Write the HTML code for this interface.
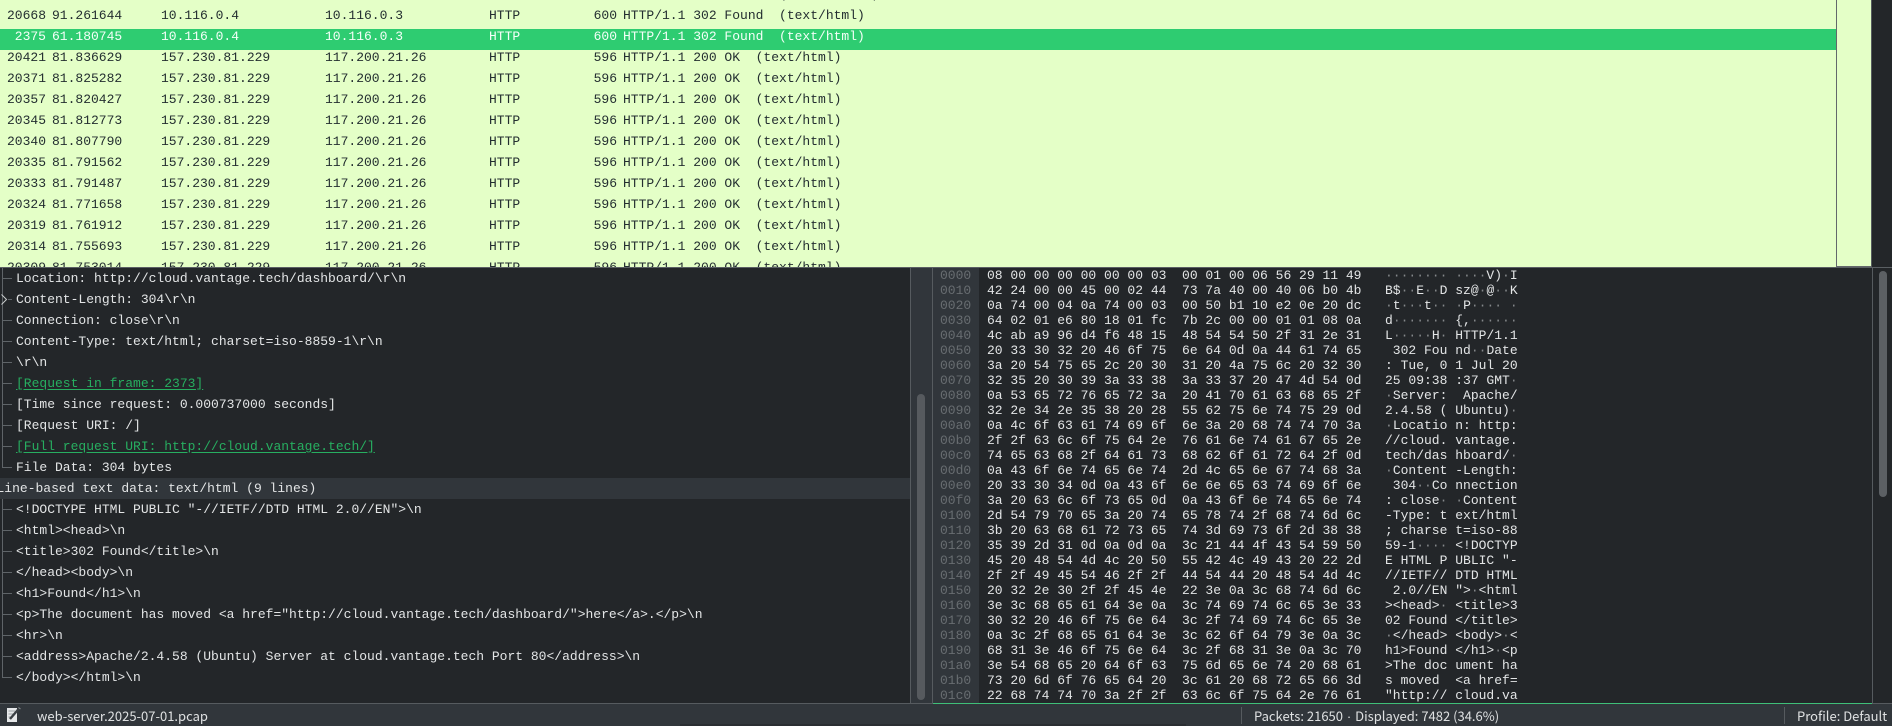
<!DOCTYPE html>
<html><head><meta charset="utf-8"><title>web-server.2025-07-01.pcap</title>
<style>
html,body{margin:0;padding:0;width:1892px;height:726px;overflow:hidden;background:#232629}
body{position:relative;font-family:"Liberation Mono",monospace;font-size:13px;color:#e3e5e6}
div,span,svg{position:absolute}
i{position:static;font-style:normal;color:#85888b}
em{font-style:normal;font-family:"Liberation Sans",sans-serif;padding:0 1px}
#list{left:0;top:0;width:1892px;height:267px;overflow:hidden;background:#e4ffc7;color:#232e30}
.r{left:0;width:1836px;height:21px;line-height:21px;white-space:pre}
.n{left:0;width:46px;text-align:right}.t{left:52px}.s{left:161px}.d{left:325px}.p{left:489px}.l{left:570px;width:47px;text-align:right}.o{left:623px}
.sel{color:#f4fff8}
.x{height:21px;line-height:21px;left:16px;white-space:pre}
.lnk{color:#27ae60;text-decoration:underline;text-underline-offset:2px}
.h{left:987px;height:15px;line-height:15px;white-space:pre}
.a{left:1385px;height:15px;line-height:15px;white-space:pre}
.f{left:940px;height:15px;line-height:15px;color:#686d71}
.st{font-family:"Noto Sans CJK SC","Liberation Sans",sans-serif;font-size:13px;top:706px;height:20px;line-height:20px;color:#dfe1e2;white-space:pre}
</style></head><body>

<div id="list">
<div style="left:0;top:29px;width:1836px;height:21px;background:#2ecc71"></div>
<div style="left:1836px;top:0;width:1px;height:267px;background:#63686b"></div>
<div style="left:1837px;top:266px;width:34px;height:1px;background:#63686b"></div>
<div style="left:1871px;top:0;width:21px;height:267px;background:#232629"></div>
<div style="left:1871px;top:0;width:1px;height:267px;background:#565b5f"></div>

<div class="r" style="top:-16px"><span class="o">                    (           p</span></div>
<div class="r" style="top:5px"><span class="n">20668</span><span class="t">91.261644</span><span class="s">10.116.0.4</span><span class="d">10.116.0.3</span><span class="p">HTTP</span><span class="l">600</span><span class="o">HTTP/1.1 302 Found  (text/html)</span></div>
<div class="r sel" style="top:26px"><span class="n">2375</span><span class="t">61.180745</span><span class="s">10.116.0.4</span><span class="d">10.116.0.3</span><span class="p">HTTP</span><span class="l">600</span><span class="o">HTTP/1.1 302 Found  (text/html)</span></div>
<div class="r" style="top:47px"><span class="n">20421</span><span class="t">81.836629</span><span class="s">157.230.81.229</span><span class="d">117.200.21.26</span><span class="p">HTTP</span><span class="l">596</span><span class="o">HTTP/1.1 200 OK  (text/html)</span></div>
<div class="r" style="top:68px"><span class="n">20371</span><span class="t">81.825282</span><span class="s">157.230.81.229</span><span class="d">117.200.21.26</span><span class="p">HTTP</span><span class="l">596</span><span class="o">HTTP/1.1 200 OK  (text/html)</span></div>
<div class="r" style="top:89px"><span class="n">20357</span><span class="t">81.820427</span><span class="s">157.230.81.229</span><span class="d">117.200.21.26</span><span class="p">HTTP</span><span class="l">596</span><span class="o">HTTP/1.1 200 OK  (text/html)</span></div>
<div class="r" style="top:110px"><span class="n">20345</span><span class="t">81.812773</span><span class="s">157.230.81.229</span><span class="d">117.200.21.26</span><span class="p">HTTP</span><span class="l">596</span><span class="o">HTTP/1.1 200 OK  (text/html)</span></div>
<div class="r" style="top:131px"><span class="n">20340</span><span class="t">81.807790</span><span class="s">157.230.81.229</span><span class="d">117.200.21.26</span><span class="p">HTTP</span><span class="l">596</span><span class="o">HTTP/1.1 200 OK  (text/html)</span></div>
<div class="r" style="top:152px"><span class="n">20335</span><span class="t">81.791562</span><span class="s">157.230.81.229</span><span class="d">117.200.21.26</span><span class="p">HTTP</span><span class="l">596</span><span class="o">HTTP/1.1 200 OK  (text/html)</span></div>
<div class="r" style="top:173px"><span class="n">20333</span><span class="t">81.791487</span><span class="s">157.230.81.229</span><span class="d">117.200.21.26</span><span class="p">HTTP</span><span class="l">596</span><span class="o">HTTP/1.1 200 OK  (text/html)</span></div>
<div class="r" style="top:194px"><span class="n">20324</span><span class="t">81.771658</span><span class="s">157.230.81.229</span><span class="d">117.200.21.26</span><span class="p">HTTP</span><span class="l">596</span><span class="o">HTTP/1.1 200 OK  (text/html)</span></div>
<div class="r" style="top:215px"><span class="n">20319</span><span class="t">81.761912</span><span class="s">157.230.81.229</span><span class="d">117.200.21.26</span><span class="p">HTTP</span><span class="l">596</span><span class="o">HTTP/1.1 200 OK  (text/html)</span></div>
<div class="r" style="top:236px"><span class="n">20314</span><span class="t">81.755693</span><span class="s">157.230.81.229</span><span class="d">117.200.21.26</span><span class="p">HTTP</span><span class="l">596</span><span class="o">HTTP/1.1 200 OK  (text/html)</span></div>
<div class="r" style="top:257px"><span class="n">20309</span><span class="t">81.753014</span><span class="s">157.230.81.229</span><span class="d">117.200.21.26</span><span class="p">HTTP</span><span class="l">596</span><span class="o">HTTP/1.1 200 OK  (text/html)</span></div>
</div>

<div style="left:0;top:267px;width:1892px;height:1px;background:#5a5f63"></div>

<!-- left: tree -->
<div style="left:0;top:478px;width:910px;height:21px;background:#31363b"></div>
<svg style="left:0;top:268px" width="16" height="420" fill="none" stroke="#5f6468" stroke-width="1">
<path d="M2.5 0V199.5H12M2.5 10.5H12M8 31.5H12M2.5 52.5H12M2.5 73.5H12M2.5 94.5H12M2.5 115.5H12M2.5 136.5H12M2.5 157.5H12M2.5 178.5H12"/>
<path d="M2.5 231V409.5H12M2.5 241.5H12M2.5 262.5H12M2.5 283.5H12M2.5 304.5H12M2.5 325.5H12M2.5 346.5H12M2.5 367.5H12M2.5 388.5H12"/>
<path d="M1.5 26.5L6.5 31.5L1.5 36.5" stroke="#c9cccd"/>
</svg>
<div class="x" style="top:268px">Location: http://cloud.vantage.tech/dashboard/\r\n</div>
<div class="x" style="top:289px">Content-Length: 304\r\n</div>
<div class="x" style="top:310px">Connection: close\r\n</div>
<div class="x" style="top:331px">Content-Type: text/html; charset=iso-8859-1\r\n</div>
<div class="x" style="top:352px">\r\n</div>
<div class="x lnk" style="top:373px">[Request in frame: 2373]</div>
<div class="x" style="top:394px">[Time since request: 0.000737000 seconds]</div>
<div class="x" style="top:415px">[Request URI: /]</div>
<div class="x lnk" style="top:436px">[Full request URI: http://cloud.vantage.tech/]</div>
<div class="x" style="top:457px">File Data: 304 bytes</div>
<div class="x" style="top:478px;left:-3.5px">Line-based text data: text/html (9 lines)</div>
<div class="x" style="top:499px">&lt;!DOCTYPE HTML PUBLIC "-//IETF//DTD HTML 2.0//EN"&gt;\n</div>
<div class="x" style="top:520px">&lt;html&gt;&lt;head&gt;\n</div>
<div class="x" style="top:541px">&lt;title&gt;302 Found&lt;/title&gt;\n</div>
<div class="x" style="top:562px">&lt;/head&gt;&lt;body&gt;\n</div>
<div class="x" style="top:583px">&lt;h1&gt;Found&lt;/h1&gt;\n</div>
<div class="x" style="top:604px">&lt;p&gt;The document has moved &lt;a href="http://cloud.vantage.tech/dashboard/"&gt;here&lt;/a&gt;.&lt;/p&gt;\n</div>
<div class="x" style="top:625px">&lt;hr&gt;\n</div>
<div class="x" style="top:646px">&lt;address&gt;Apache/2.4.58 (Ubuntu) Server at cloud.vantage.tech Port 80&lt;/address&gt;\n</div>
<div class="x" style="top:667px">&lt;/body&gt;&lt;/html&gt;\n</div>

<!-- splitter / scroll -->
<div style="left:910px;top:268px;width:23px;height:436px;background:#31363b"></div>
<div style="left:910px;top:268px;width:1px;height:436px;background:#565b5f"></div>
<div style="left:932px;top:268px;width:1px;height:436px;background:#565b5f"></div>
<div style="left:917px;top:394px;width:8px;height:306px;border-radius:4px;background:#565a5e"></div>
<div style="left:933px;top:268px;width:46px;height:435px;background:#31363b"></div>

<!-- hex offsets -->
<div class="f" style="top:268px">0000</div><div class="f" style="top:283px">0010</div><div class="f" style="top:298px">0020</div><div class="f" style="top:313px">0030</div><div class="f" style="top:328px">0040</div><div class="f" style="top:343px">0050</div><div class="f" style="top:358px">0060</div><div class="f" style="top:373px">0070</div><div class="f" style="top:388px">0080</div><div class="f" style="top:403px">0090</div><div class="f" style="top:418px">00a0</div><div class="f" style="top:433px">00b0</div><div class="f" style="top:448px">00c0</div><div class="f" style="top:463px">00d0</div><div class="f" style="top:478px">00e0</div><div class="f" style="top:493px">00f0</div><div class="f" style="top:508px">0100</div><div class="f" style="top:523px">0110</div><div class="f" style="top:538px">0120</div><div class="f" style="top:553px">0130</div><div class="f" style="top:568px">0140</div><div class="f" style="top:583px">0150</div><div class="f" style="top:598px">0160</div><div class="f" style="top:613px">0170</div><div class="f" style="top:628px">0180</div><div class="f" style="top:643px">0190</div><div class="f" style="top:658px">01a0</div><div class="f" style="top:673px">01b0</div><div class="f" style="top:688px">01c0</div>

<!-- hex -->
<div class="h" style="top:268px">08 00 00 00 00 00 00 03  00 01 00 06 56 29 11 49</div>
<div class="h" style="top:283px">42 24 00 00 45 00 02 44  73 7a 40 00 40 06 b0 4b</div>
<div class="h" style="top:298px">0a 74 00 04 0a 74 00 03  00 50 b1 10 e2 0e 20 dc</div>
<div class="h" style="top:313px">64 02 01 e6 80 18 01 fc  7b 2c 00 00 01 01 08 0a</div>
<div class="h" style="top:328px">4c ab a9 96 d4 f6 48 15  48 54 54 50 2f 31 2e 31</div>
<div class="h" style="top:343px">20 33 30 32 20 46 6f 75  6e 64 0d 0a 44 61 74 65</div>
<div class="h" style="top:358px">3a 20 54 75 65 2c 20 30  31 20 4a 75 6c 20 32 30</div>
<div class="h" style="top:373px">32 35 20 30 39 3a 33 38  3a 33 37 20 47 4d 54 0d</div>
<div class="h" style="top:388px">0a 53 65 72 76 65 72 3a  20 41 70 61 63 68 65 2f</div>
<div class="h" style="top:403px">32 2e 34 2e 35 38 20 28  55 62 75 6e 74 75 29 0d</div>
<div class="h" style="top:418px">0a 4c 6f 63 61 74 69 6f  6e 3a 20 68 74 74 70 3a</div>
<div class="h" style="top:433px">2f 2f 63 6c 6f 75 64 2e  76 61 6e 74 61 67 65 2e</div>
<div class="h" style="top:448px">74 65 63 68 2f 64 61 73  68 62 6f 61 72 64 2f 0d</div>
<div class="h" style="top:463px">0a 43 6f 6e 74 65 6e 74  2d 4c 65 6e 67 74 68 3a</div>
<div class="h" style="top:478px">20 33 30 34 0d 0a 43 6f  6e 6e 65 63 74 69 6f 6e</div>
<div class="h" style="top:493px">3a 20 63 6c 6f 73 65 0d  0a 43 6f 6e 74 65 6e 74</div>
<div class="h" style="top:508px">2d 54 79 70 65 3a 20 74  65 78 74 2f 68 74 6d 6c</div>
<div class="h" style="top:523px">3b 20 63 68 61 72 73 65  74 3d 69 73 6f 2d 38 38</div>
<div class="h" style="top:538px">35 39 2d 31 0d 0a 0d 0a  3c 21 44 4f 43 54 59 50</div>
<div class="h" style="top:553px">45 20 48 54 4d 4c 20 50  55 42 4c 49 43 20 22 2d</div>
<div class="h" style="top:568px">2f 2f 49 45 54 46 2f 2f  44 54 44 20 48 54 4d 4c</div>
<div class="h" style="top:583px">20 32 2e 30 2f 2f 45 4e  22 3e 0a 3c 68 74 6d 6c</div>
<div class="h" style="top:598px">3e 3c 68 65 61 64 3e 0a  3c 74 69 74 6c 65 3e 33</div>
<div class="h" style="top:613px">30 32 20 46 6f 75 6e 64  3c 2f 74 69 74 6c 65 3e</div>
<div class="h" style="top:628px">0a 3c 2f 68 65 61 64 3e  3c 62 6f 64 79 3e 0a 3c</div>
<div class="h" style="top:643px">68 31 3e 46 6f 75 6e 64  3c 2f 68 31 3e 0a 3c 70</div>
<div class="h" style="top:658px">3e 54 68 65 20 64 6f 63  75 6d 65 6e 74 20 68 61</div>
<div class="h" style="top:673px">73 20 6d 6f 76 65 64 20  3c 61 20 68 72 65 66 3d</div>
<div class="h" style="top:688px">22 68 74 74 70 3a 2f 2f  63 6c 6f 75 64 2e 76 61</div>

<!-- ascii -->
<div class="a" style="top:268px"><i>········ ····</i>V)<i>·</i>I</div>
<div class="a" style="top:283px">B$<i>··</i>E<i>··</i>D sz@<i>·</i>@<i>··</i>K</div>
<div class="a" style="top:298px"><i>·</i>t<i>···</i>t<i>·· ·</i>P<i>···· ·</i></div>
<div class="a" style="top:313px">d<i>······· </i>{,<i>······</i></div>
<div class="a" style="top:328px">L<i>·····</i>H<i>· </i>HTTP/1.1</div>
<div class="a" style="top:343px"> 302 Fou nd<i>··</i>Date</div>
<div class="a" style="top:358px">: Tue, 0 1 Jul 20</div>
<div class="a" style="top:373px">25 09:38 :37 GMT<i>·</i></div>
<div class="a" style="top:388px"><i>·</i>Server:  Apache/</div>
<div class="a" style="top:403px">2.4.58 ( Ubuntu)<i>·</i></div>
<div class="a" style="top:418px"><i>·</i>Locatio n: http:</div>
<div class="a" style="top:433px">//cloud. vantage.</div>
<div class="a" style="top:448px">tech/das hboard/<i>·</i></div>
<div class="a" style="top:463px"><i>·</i>Content -Length:</div>
<div class="a" style="top:478px"> 304<i>··</i>Co nnection</div>
<div class="a" style="top:493px">: close<i>· ·</i>Content</div>
<div class="a" style="top:508px">-Type: t ext/html</div>
<div class="a" style="top:523px">; charse t=iso-88</div>
<div class="a" style="top:538px">59-1<i>···· </i>&lt;!DOCTYP</div>
<div class="a" style="top:553px">E HTML P UBLIC "-</div>
<div class="a" style="top:568px">//IETF// DTD HTML</div>
<div class="a" style="top:583px"> 2.0//EN "&gt;<i>·</i>&lt;html</div>
<div class="a" style="top:598px">&gt;&lt;head&gt;<i>· </i>&lt;title&gt;3</div>
<div class="a" style="top:613px">02 Found &lt;/title&gt;</div>
<div class="a" style="top:628px"><i>·</i>&lt;/head&gt; &lt;body&gt;<i>·</i>&lt;</div>
<div class="a" style="top:643px">h1&gt;Found &lt;/h1&gt;<i>·</i>&lt;p</div>
<div class="a" style="top:658px">&gt;The doc ument ha</div>
<div class="a" style="top:673px">s moved  &lt;a href=</div>
<div class="a" style="top:688px">"http:// cloud.va</div>

<!-- right scrollbar -->
<div style="left:1872px;top:268px;width:1px;height:436px;background:#565b5f"></div>
<div style="left:1879px;top:271px;width:8px;height:226px;border-radius:4px;background:#5c6064"></div>

<!-- status bar -->
<div style="left:0;top:704px;width:1892px;height:22px;background:#31363b"></div>
<div style="left:0;top:703px;width:933px;height:1px;background:#565b5f"></div>
<div style="left:1872px;top:703px;width:20px;height:1px;background:#565b5f"></div>
<div style="left:933px;top:703px;width:939px;height:1px;background:#3fbf78"></div>
<div style="left:680px;top:724px;width:506px;height:2px;background:#2a2e32"></div>
<svg style="left:5px;top:706px" width="16" height="17">
<rect x="2" y="2" width="10" height="14" fill="#e6e8e9"/>
<path d="M3.5 5H10M3.5 8H10M3.5 11H8" stroke="#9aa0a4" stroke-width="1"/>
<path d="M5 13L14 2.5" stroke="#3a3f43" stroke-width="2.4"/>
<path d="M13.5 1.5L15.5 3" stroke="#8a8f93" stroke-width="1"/>
</svg>
<div class="st" style="left:37px">web-server.2025-07-01.pcap</div>
<div style="left:1241px;top:707px;width:1px;height:17px;background:#565b5f"></div>
<div class="st" style="left:1254px">Packets: 21650 <em>·</em> Displayed: 7482 (34.6%)</div>
<div style="left:1784px;top:707px;width:1px;height:17px;background:#565b5f"></div>
<div class="st" style="left:1797px">Profile: Default</div>
</body></html>
